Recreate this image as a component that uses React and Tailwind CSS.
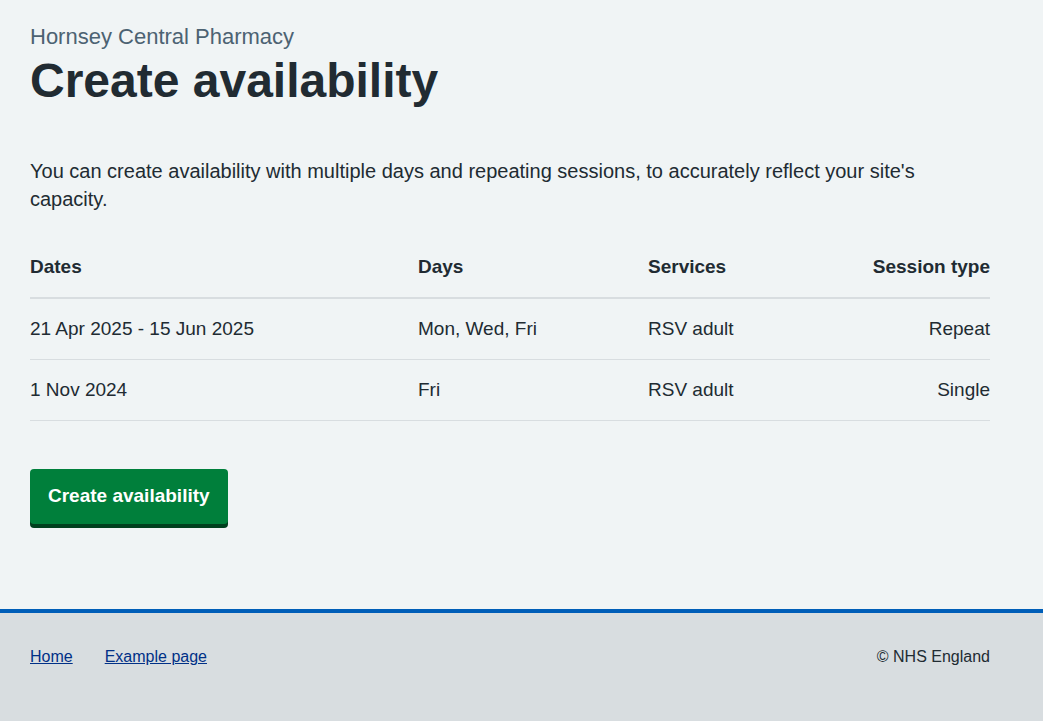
const rows = [
  { dates: '21 Apr 2025 - 15 Jun 2025', days: 'Mon, Wed, Fri', services: 'RSV adult', type: 'Repeat' },
  { dates: '1 Nov 2024', days: 'Fri', services: 'RSV adult', type: 'Single' },
]

export default function App() {
  return (
    <div className="min-h-screen flex flex-col bg-[#f0f4f5] text-[#212b32] font-['Liberation_Sans',Arial,sans-serif]">
      <main className="flex-1 px-[30px] pt-[21px] pb-[80px]">
        <div className="w-[960px]">
          <span className="block text-[22px] leading-[32px] text-[#4c6272]">Hornsey Central Pharmacy</span>
          <h1 className="text-[48px] leading-[56px] font-bold mb-[48px]">Create availability</h1>

          <p className="text-[20px] leading-[28px] mb-[24px]">
            You can create availability with multiple days and repeating sessions, to accurately reflect your site's capacity.
          </p>

          <table className="w-full table-fixed text-[19px] leading-[28px] mb-[48px]">
            <thead>
              <tr className="border-b-2 border-[#d8dde0]">
                <th className="w-[388px] text-left font-bold py-4">Dates</th>
                <th className="w-[230px] text-left font-bold py-4">Days</th>
                <th className="text-left font-bold py-4">Services</th>
                <th className="text-right font-bold py-4">Session type</th>
              </tr>
            </thead>
            <tbody>
              {rows.map((r, i) => (
                <tr key={i} className="border-b border-[#d8dde0]">
                  <td className="py-4">{r.dates}</td>
                  <td className="py-4">{r.days}</td>
                  <td className="py-4">{r.services}</td>
                  <td className="py-4 text-right">{r.type}</td>
                </tr>
              ))}
            </tbody>
          </table>

          <button className="h-[55px] px-[18px] rounded-[4px] bg-[#007f3b] text-white text-[19px] font-bold shadow-[0_4px_0_#00401e]">
            Create availability
          </button>
        </div>
      </main>

      <footer className="h-[112px] bg-[#d8dde0] border-t-4 border-[#005eb8] px-[30px] pt-[32px]">
        <div className="w-[960px] flex items-center justify-between text-[16px] leading-[24px]">
          <ul className="flex gap-[32px]">
            <li><a href="#" className="text-[#003087] underline">Home</a></li>
            <li><a href="#" className="text-[#003087] underline">Example page</a></li>
          </ul>
          <p>© NHS England</p>
        </div>
      </footer>
    </div>
  )
}
